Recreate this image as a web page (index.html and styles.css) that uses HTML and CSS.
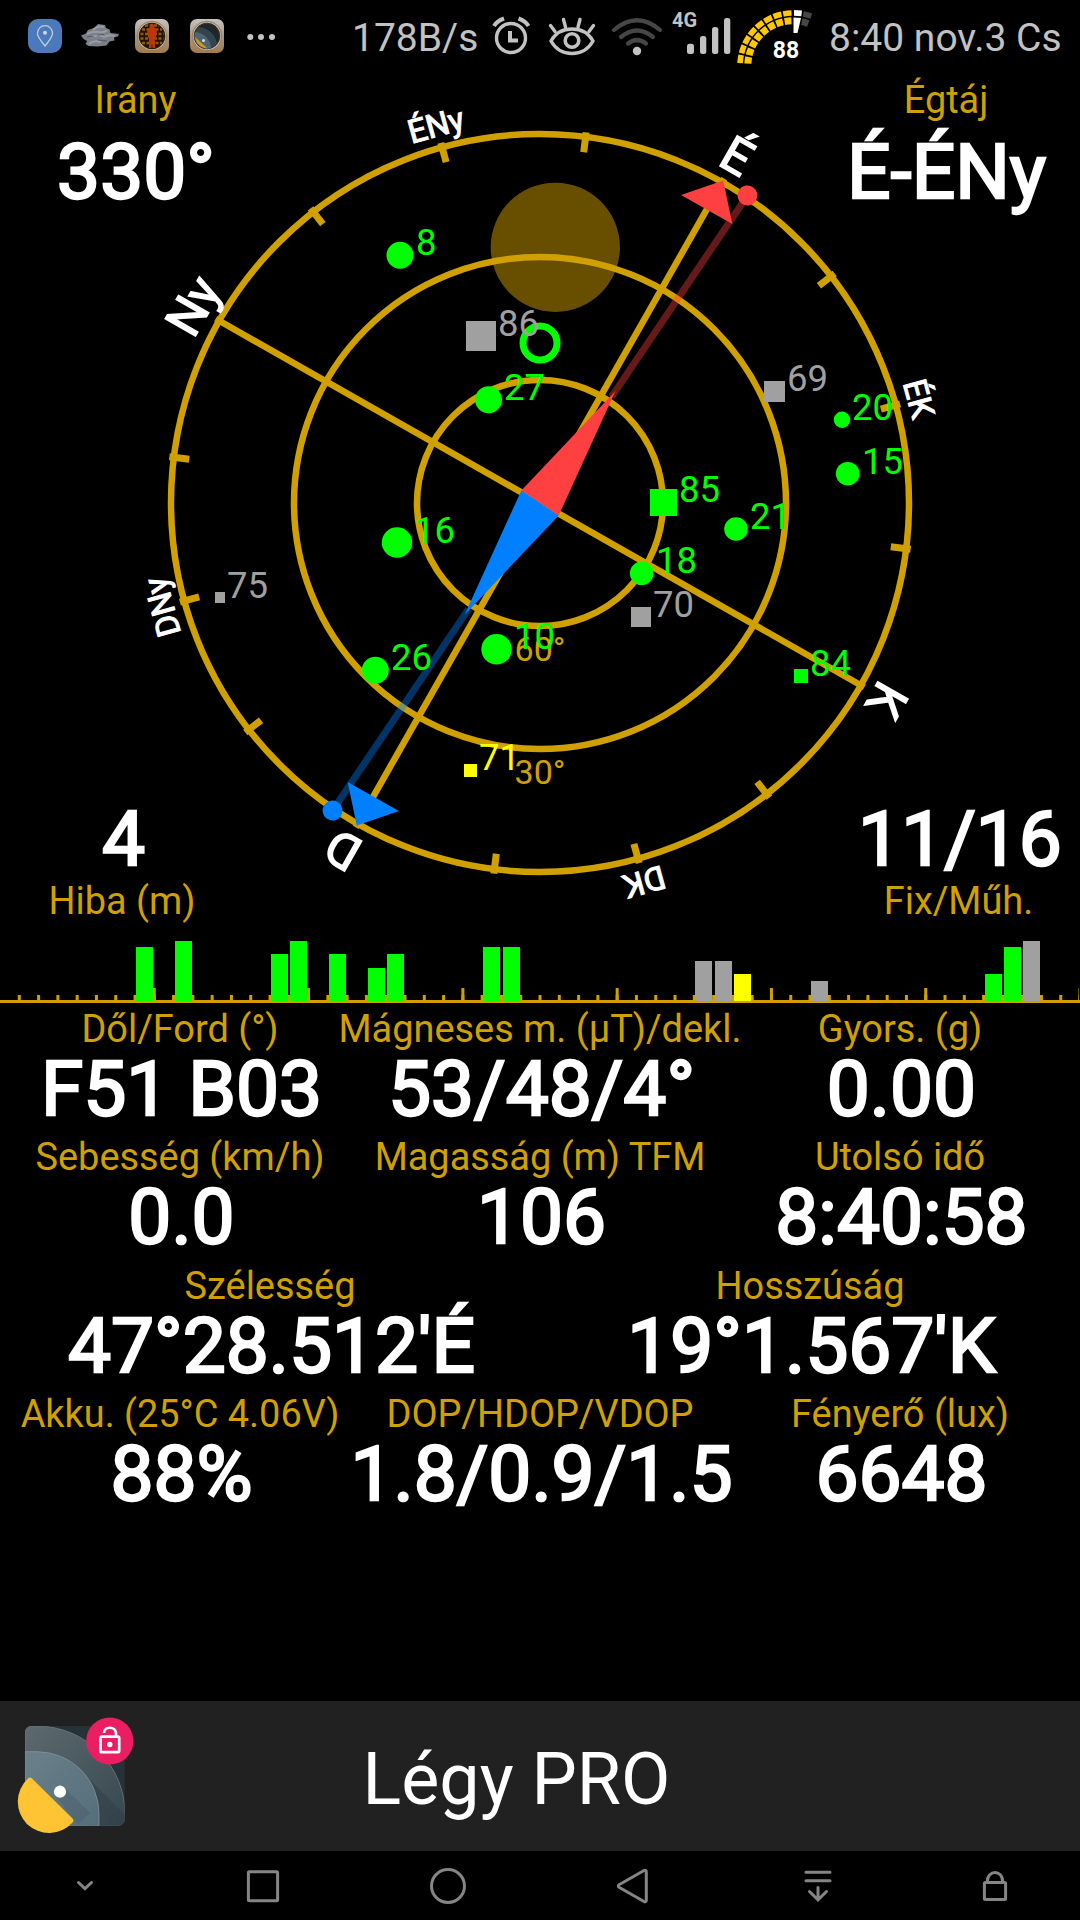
FILE: index.html
```html
<!doctype html>
<html lang="hu">
<head>
	<meta charset="utf-8">
	<title>GPS</title>
	<link rel="stylesheet" href="styles.css">
</head>
<body>

	<!--status bar start-->
	<div class="status">
		<div class="s_apps">
			<svg width="34" height="34" viewBox="0 0 34 34">
				<rect width="34" height="34" rx="10" fill="#4a7abb"/>
				<path d="M17 27C12 20.500 9.500 18 9.500 14.200a7.500 7.500 0 0 1 15 0C24.500 18 22 20.500 17 27z" fill="none" stroke="#c4ccd8" stroke-width="1.300"/>
				<circle cx="17" cy="13.700" r="2" fill="#d0d6df"/>
			</svg>
			<svg class="cloud" width="38" height="26" viewBox="0 0 38 26">
				<path d="M0 12.500l5-2 2-3.500 6-2 4-4 7 1 1 3 3.500 1.500 1 3.500 8.500 1-1 2.500-4 1 .5 3-5 1-3 4-9 1-9-.5-3-2 1.500-3-3.500-2z" fill="#7b7f88"/>
				<path d="M12 7q5-5 11-3M6 11q6-3 12-2t8-2M11 15q6-5 12-1 5-3 11-1M8 21q5-4 12-2" fill="none" stroke="#989ca5" stroke-width="2"/>
				<path d="M6 14q4-2 7 .5M16 12l7-.5M17 17l9 1" fill="none" stroke="#565a62" stroke-width="1"/>
			</svg>
			<svg width="34" height="34" viewBox="0 0 34 34">
				<defs>
					<linearGradient id="frame" x1="0" y1="0" x2="0" y2="1"><stop offset="0" stop-color="#c5c4c2"/><stop offset=".5" stop-color="#a99785"/><stop offset="1" stop-color="#a37b4b"/></linearGradient>
				</defs>
				<rect width="34" height="34" rx="7" fill="url(#frame)"/>
				<circle cx="17" cy="17" r="14.800" fill="#c0b3a0" stroke="#8b6e4c" stroke-width=".8"/>
				<circle cx="17" cy="17" r="12.500" fill="#241105" stroke="#2b1d14" stroke-width="1.500"/>
				<path d="M7 10.500h20M5.500 15h23M5.500 19.500h23M7 24h20M10 6.500h14" stroke="#8c5a18" stroke-width="2.600" stroke-dasharray="3 1.500"/>
				<path d="M15.500 5h3l.5 3 3 3-1 7-1 2v9h-2.500l-.5-7-.5 7H14v-9l-1-2-1-7 3-3z" fill="#bb3608"/>
			</svg>
			<svg width="34" height="34" viewBox="0 0 34 34">
				<rect width="34" height="34" rx="7" fill="url(#frame)"/>
				<circle cx="17" cy="17" r="14.800" fill="#c0b3a0" stroke="#8b6e4c" stroke-width=".8"/>
				<circle cx="17" cy="17" r="12.800" fill="#20262a" stroke="#3b3029" stroke-width="1"/>
				<path d="M8 8a20 20 0 0 1 19 17l-6 4A13 13 0 0 1 5 14z" fill="#34444d"/>
				<path d="M5 13a17 17 0 0 1 16 16A13 13 0 0 1 4.500 18z" fill="#4d6674"/>
				<path d="M5 18l12.500 11.500A12.800 12.800 0 0 1 5 18z" fill="#c89b24"/>
				<circle cx="13.500" cy="21.500" r="1.500" fill="#ddd"/>
			</svg>
			<svg width="30" height="34" viewBox="0 0 30 34" fill="#c2c2c2"><circle cx="5.300" cy="18" r="3"/><circle cx="16" cy="18" r="3"/><circle cx="27" cy="18" r="3"/></svg>
		</div>
		<div class="s_rate">178B/s</div>
		<!-- alarm, eye comfort, wifi, signal, battery gauge -->
		<svg class="s_icons" width="340" height="72" viewBox="485 0 340 72" fill="none" stroke="#c2c2c2">
			<circle cx="511" cy="38" r="14.500" stroke-width="3.400"/>
			<path d="M510 31v9.500h8" stroke-width="4"/>
			<path d="M494 26q3-5 10-7.500M528.500 26q-3-5-10-7.500" stroke-width="4"/>
			<path d="M551 41c5-9 13-12 21-12s16 3 21 12c-5 9-13 12.500-21 12.500S556 50 551 41z" stroke-width="3.400"/>
			<circle cx="572" cy="40.500" r="6.800" stroke-width="3.600"/>
			<path d="M550.500 25.500l4.500 6M563.500 19.500l2 7.500M580 19.500l-2 7.500M593.500 25.500l-4.500 6" stroke-width="3.400" stroke-linecap="round"/>
			<g stroke="#464646" stroke-width="4.200" stroke-linecap="round">
				<path d="M614 30q23-19.500 46 0"/>
				<path d="M621 37q16-13 32 0"/>
				<path d="M628 43.500q9-7 18 0"/>
			</g>
			<circle cx="637" cy="51" r="4.200" fill="#c2c2c2" stroke="none"/>
			<g fill="#c2c2c2" stroke="none">
				<rect x="687" y="43.700" width="7" height="10.300" rx="2.500"/>
				<rect x="700" y="36" width="6.300" height="18" rx="2.500"/>
				<rect x="712" y="27" width="6.300" height="27" rx="2.500"/>
				<rect x="724" y="18" width="6.300" height="36" rx="2.500"/>
				<text class="net" x="672" y="27">4G</text>
			</g>
			<g stroke="#ffc800">
				<circle cx="793" cy="66" r="53" pathLength="360" transform="rotate(183 793 66)" stroke-width="5.600" stroke-dasharray="9 1.900 9 1.900 9 1.900 9 1.900 9 1.900 9 1.900 9 1.900 9 300"/>
				<circle cx="793" cy="66" r="45.200" pathLength="360" transform="rotate(183 793 66)" stroke-width="7" stroke-dasharray="8.600 2.300 8.600 2.300 8.600 2.300 8.600 2.300 8.600 2.300 8.600 2.300 8.600 2.300 8.600 300"/>
			</g>
			<g stroke="#464646">
				<circle cx="793" cy="66" r="53" pathLength="360" transform="rotate(281.200 793 66)" stroke-width="5.600" stroke-dasharray="9 351"/>
				<circle cx="793" cy="66" r="45.200" pathLength="360" transform="rotate(281.200 793 66)" stroke-width="7" stroke-dasharray="8.600 351.400"/>
			</g>
			<path d="M794 10l8 .5-.7 5.700-7.300-.4zM793.500 17.500l7.500.5-3.500 15h-4z" fill="#fff" stroke="none"/>
			<text class="charge" x="786" y="57.500">88</text>
		</svg>
		<div class="s_time">8:40 nov.3 Cs</div>
	</div>
	<!--end status bar-->

	<!--compass start-->
	<div class="sky">
		<svg class="compass" width="1080" height="853" viewBox="-540 -431 1080 853">
			<circle class="sun" cx="15.300" cy="-255.700" r="64.600"/>
			<g class="grid">
				<circle r="123"/>
				<circle r="246"/>
				<circle r="369"/>
			</g>
			<g transform="rotate(29.600)">
				<path class="grid" d="M0-373V373M-373 0H373"/>
				<g class="grid ticks">
					<path id="tick" d="M0-373.500v20" transform="rotate(22.500)"/>
					<use href="#tick" transform="rotate(22.500)"/>
					<use href="#tick" transform="rotate(45)"/>
					<use href="#tick" transform="rotate(90)"/>
					<use href="#tick" transform="rotate(112.500)"/>
					<use href="#tick" transform="rotate(135)"/>
					<use href="#tick" transform="rotate(180)"/>
					<use href="#tick" transform="rotate(202.500)"/>
					<use href="#tick" transform="rotate(225)"/>
					<use href="#tick" transform="rotate(270)"/>
					<use href="#tick" transform="rotate(292.500)"/>
					<use href="#tick" transform="rotate(315)"/>
				</g>
				<g class="point">
					<text y="-382">É</text>
					<text y="-382" transform="rotate(90)">K</text>
					<text y="-382" transform="rotate(180)">D</text>
					<text y="-382" transform="rotate(270)">Ny</text>
				</g>
				<g class="point minor">
					<text y="-381.500" transform="rotate(45)">ÉK</text>
					<text y="-381.500" transform="rotate(135)">DK</text>
					<text y="-380.500" transform="rotate(225)">DNy</text>
					<text y="-380.500" transform="rotate(315)">ÉNy</text>
				</g>
				<path class="north" d="M0-371l29.500 33.500h-59z"/>
				<path class="south" d="M0 371l29.500-33.500h-59z"/>
			</g>
			<text class="elev" y="158">60°</text>
			<text class="elev" y="281">30°</text>

			<!-- magnetic needle -->
			<g transform="rotate(34)">
				<path class="beam n" d="M0-128V-371"/>
				<path class="beam s" d="M0 128V371"/>
				<path class="north" d="M0-135L22.500 0h-45z"/>
				<path class="south" d="M0 135L22.500 0h-45z"/>
				<circle class="north" cy="-371" r="10"/>
				<circle class="south" cy="371" r="10"/>
			</g>

			<circle class="level" cy="-160" r="17"/>

			<!-- satellites -->
			<g class="sat lost">
				<rect x="-74" y="-182" width="30" height="30"/><text x="-42" y="-167">86</text>
				<rect x="224" y="-122" width="21" height="21"/><text x="247" y="-112">69</text>
				<rect x="91" y="104" width="20" height="20"/><text x="113" y="114">70</text>
				<rect x="-325" y="89" width="10" height="11"/><text x="-313" y="95">75</text>
			</g>
			<g class="sat fix">
				<circle cx="-140" cy="-247.700" r="13.500"/><text x="-124" y="-248">8</text>
				<circle cx="-51.500" cy="-103.300" r="13.500"/><text x="-36" y="-103">27</text>
				<circle cx="302" cy="-83.300" r="8.200"/><text x="312" y="-83">20</text>
				<circle cx="307.700" cy="-29.300" r="11.800"/><text x="322" y="-29">15</text>
				<rect x="110" y="-14" width="27" height="27"/><text x="139" y="-1">85</text>
				<circle cx="196" cy="26" r="11.800"/><text x="210" y="26">21</text>
				<circle cx="101.700" cy="70.300" r="11.800"/><text x="116" y="70">18</text>
				<rect x="254" y="166" width="14" height="14"/><text x="270" y="173">84</text>
				<circle cx="-143" cy="39.500" r="15.200"/><text x="-126" y="40">16</text>
				<circle cx="-164.700" cy="167.300" r="13.500"/><text x="-149" y="167">26</text>
				<circle cx="-43.500" cy="146.300" r="15.200"/><text x="-26" y="146">10</text>
			</g>
			<g class="sat weak">
				<rect x="-76" y="261" width="13" height="13"/><text x="-61" y="267">71</text>
			</g>
		</svg>

		<div class="corner top left">
			<div class="label">Irány</div>
			<div class="value">330°</div>
		</div>
		<div class="corner top right">
			<div class="label">Égtáj</div>
			<div class="value">É-ÉNy</div>
		</div>
		<div class="corner bottom left">
			<div class="value">4</div>
			<div class="label">Hiba (m)</div>
		</div>
		<div class="corner bottom right">
			<div class="value">11/16</div>
			<div class="label">Fix/Műh.</div>
		</div>
	</div>
	<!--end compass-->

	<!-- signal strength, one slot per satellite -->
	<div class="signal">
		<svg class="scale" width="1080" height="78" viewBox="0 0 1080 78">
			<path d="M17.800 73H1079" stroke-width="6" stroke-dasharray="3 16.286"/>
			<path d="M152.800 69.500H1079" stroke-width="13" stroke-dasharray="3 151.286"/>
			<path d="M0 76.500H1080" stroke-width="3"/>
		</svg>
		<div class="bars">
			<i class="fix" style="grid-column:8;height:54px"></i>
			<i class="fix" style="grid-column:10;height:60px"></i>
			<i class="fix" style="grid-column:15;height:47px"></i>
			<i class="fix" style="grid-column:16;height:60px"></i>
			<i class="fix" style="grid-column:18;height:47px"></i>
			<i class="fix" style="grid-column:20;height:33px"></i>
			<i class="fix" style="grid-column:21;height:47px"></i>
			<i class="fix" style="grid-column:26;height:54px"></i>
			<i class="fix" style="grid-column:27;height:54px"></i>
			<i class="lost" style="grid-column:37;height:40px"></i>
			<i class="lost" style="grid-column:38;height:40px"></i>
			<i class="weak" style="grid-column:39;height:27px"></i>
			<i class="lost" style="grid-column:43;height:20px"></i>
			<i class="fix" style="grid-column:52;height:27px"></i>
			<i class="fix" style="grid-column:53;height:54px"></i>
			<i class="lost" style="grid-column:54;height:60px"></i>
		</div>
	</div>

	<!--readings start-->
	<div class="readings">
		<div class="row">
			<div><div class="label">Dől/Ford (°)</div><div class="value">F51 B03</div></div>
			<div><div class="label">Mágneses m. (µT)/dekl.</div><div class="value">53/48/4°</div></div>
			<div><div class="label">Gyors. (g)</div><div class="value">0.00</div></div>
		</div>
		<div class="row">
			<div><div class="label">Sebesség (km/h)</div><div class="value">0.0</div></div>
			<div><div class="label">Magasság (m) TFM</div><div class="value">106</div></div>
			<div><div class="label">Utolsó idő</div><div class="value">8:40:58</div></div>
		</div>
		<div class="row">
			<div><div class="label">Szélesség</div><div class="value">47°28.512'É</div></div>
			<div><div class="label">Hosszúság</div><div class="value">19°1.567'K</div></div>
		</div>
		<div class="row">
			<div><div class="label">Akku. (25°C 4.06V)</div><div class="value">88%</div></div>
			<div><div class="label">DOP/HDOP/VDOP</div><div class="value">1.8/0.9/1.5</div></div>
			<div><div class="label">Fényerő (lux)</div><div class="value">6648</div></div>
		</div>
	</div>
	<!--end readings-->

	<div class="promo">
		<svg width="124" height="126" viewBox="14 1713 124 126">
			<defs>
				<clipPath id="tile"><rect x="25" y="1726" width="99.700" height="99.700" rx="6"/></clipPath>
				<linearGradient id="far" x1="0" y1="0" x2="1" y2="1"><stop offset="0" stop-color="#5d6a70"/><stop offset="1" stop-color="#37474f"/></linearGradient>
				<linearGradient id="near" x1="0" y1="0" x2="1" y2="1"><stop offset="0" stop-color="#6b808b"/><stop offset="1" stop-color="#546e7a"/></linearGradient>
			</defs>
			<g clip-path="url(#tile)">
				<rect x="25" y="1726" width="100" height="100" fill="#263238"/>
				<path d="M25 1726h12a88 88 0 0 1 88 88v12H25z" fill="url(#far)" stroke="#718087" stroke-width=".7"/>
				<path d="M88 1778l37 37v11H99z" fill="#2f3e46" opacity=".5"/>
				<path d="M25 1751.700h12A62 62 0 0 1 99 1814v12H25z" fill="url(#near)" stroke="#87989f" stroke-width=".7"/>
				<path d="M64 1787l26 26-12 11-22-27z" fill="#455a64" opacity=".35"/>
			</g>
			<path d="M28 1778.500q2-2 4 0L72 1818q2.500 2.500.5 4.500A31.330 31.330 0 1 1 28 1778.500z" fill="#ffc433"/>
			<circle cx="60" cy="1791.700" r="6.100" fill="#fff"/>
			<circle cx="109.800" cy="1741" r="23.600" fill="#e91e63"/>
			<g fill="none" stroke="#fff" stroke-width="2.700">
				<rect x="100.500" y="1736.700" width="18.700" height="15.500" rx="1.500"/>
				<path d="M104 1733c0-7 11.500-7 12 0v3.500"/>
			</g>
			<circle cx="109.800" cy="1744.500" r="2.700" fill="#fff"/>
		</svg>
		<div class="p_text">Légy PRO</div>
	</div>

	<!--navigation bar start-->
	<div class="nav">
		<svg width="40" height="40" viewBox="0 0 40 40"><path d="M13.500 16.500L20 22.700l6.500-6.200" stroke-linecap="round"/></svg>
		<svg width="40" height="40" viewBox="0 0 40 40"><rect x="5.400" y="5.700" width="29.200" height="29" rx="1"/></svg>
		<svg width="40" height="40" viewBox="0 0 40 40"><circle cx="20" cy="20" r="16.500"/></svg>
		<svg width="40" height="40" viewBox="0 0 40 40"><path d="M6 18.800L31 4.500c1-.6 2.300-.2 2.300 1.200v28.600c0 1.400-1.300 1.800-2.300 1.200L6 21.200c-.9-.6-.9-1.800 0-2.400z"/></svg>
		<svg width="40" height="40" viewBox="0 0 40 40"><path d="M8 6.200h24M8 14.700h24M20 21.500v12M11.500 25.500l8.500 8.300 8.500-8.300" stroke-linecap="round"/></svg>
		<svg width="40" height="40" viewBox="0 0 40 40"><rect x="9.400" y="16.500" width="21.200" height="17" rx="1"/><path d="M12.300 16c0-12.700 15.400-12.700 15.400 0"/></svg>
	</div>
	<!--end navigation bar-->

</body>
</html>
```
FILE: styles.css
```css
*{margin:0;padding:0;box-sizing:border-box;}
body{width:1080px;height:1920px;background:#000;color:#fff;font-family:Roboto,"Noto Sans",sans-serif;overflow:hidden;display:flex;flex-direction:column;}
svg{display:block;flex:none;}

/*status bar start*/
.status{height:72px;display:flex;align-items:center;padding:0 0 0 28px;color:#c2c2c2;font-size:39px;line-height:72px;white-space:nowrap;}
.s_apps{width:324px;display:flex;gap:21px;align-items:center;}
.s_apps .cloud{margin:0 -5px 0 -2px;}
.s_rate{width:133px;padding-top:3px;}
.s_icons{margin-right:4px;}
.s_icons text{stroke:none;font-weight:700;}
.s_icons .net{font-size:20px;}
.s_icons .charge{font-size:23px;fill:#fff;text-anchor:middle;}
.s_time{padding-top:3px;}
/*end status bar*/

.label{font-size:37.900px;line-height:42px;color:#d0a000;white-space:nowrap;}
.value{font-size:76.600px;line-height:78px;white-space:nowrap;-webkit-text-stroke:2.400px #fff;}

/*compass start*/
.sky{height:853px;display:grid;grid-template:1fr 1fr / 1fr 1fr;}
.compass{grid-area:1/1/3/3;}
.corner{text-align:center;z-index:1;display:flex;flex-direction:column;align-items:center;}
.top.left{grid-area:1/1;width:271px;padding-top:7px;}
.top.right{grid-area:1/2;width:268px;justify-self:end;padding-top:7px;}
.bottom{align-self:end;padding-bottom:3px;}
.bottom.left{grid-area:2/1;width:244px;}
.bottom.right{grid-area:2/2;width:243px;justify-self:end;}
.top .value{margin-top:12px;padding-left:1px;}
.bottom .value{margin-bottom:2px;padding-left:3px;}

.grid{fill:none;stroke:#d0a000;stroke-width:6.500px;}
.ticks{stroke-width:7px;}
.sun{fill:#684f00;}
.point{font-size:49px;text-anchor:middle;fill:#fff;stroke:#fff;stroke-width:1.500px;}
.minor{font-size:32.500px;stroke-width:1.100px;}
.elev{font-size:34px;text-anchor:middle;fill:#d0a000;}
.north{fill:#ff4040;}
.south{fill:#0080ff;}
.beam{stroke-width:7px;opacity:.4;}
.beam.n{stroke:#ff4040;}
.beam.s{stroke:#0080ff;}
.level{fill:none;stroke:#0f0;stroke-width:7px;}
.sat{font-size:36.500px;}
.sat.fix{fill:#0f0;}
.sat.lost{fill:#a0a0a0;}
.sat.weak{fill:#ff0;}
/*end compass*/

/*signal start*/
.signal{height:78px;display:grid;}
.scale{grid-area:1/1;stroke:#d0a000;}
.bars{grid-area:1/1;z-index:1;display:grid;grid-template-columns:repeat(56,1fr);align-items:end;justify-items:center;padding-bottom:2px;}
.bars i{width:17px;grid-row:1;}
.bars .fix{background:#0f0;}
.bars .lost{background:#a0a0a0;}
.bars .weak{background:#ff0;}
/*end signal*/

.readings{height:698px;padding-top:5px;}
.row{display:grid;grid-auto-flow:column;grid-auto-columns:minmax(0,1fr);height:128.300px;}
.row > div{display:flex;flex-direction:column;align-items:center;}
.row .value{padding-left:3px;}

.promo{height:150px;background:#212121;display:flex;align-items:center;padding-left:14px;}
.p_text{width:757px;font-size:71.800px;line-height:143px;padding-top:7px;text-align:center;}

.nav{height:69px;display:grid;grid-template-columns:170px repeat(4,185px) 170px;align-items:center;justify-items:center;fill:none;stroke:#858585;stroke-width:3px;}
```
